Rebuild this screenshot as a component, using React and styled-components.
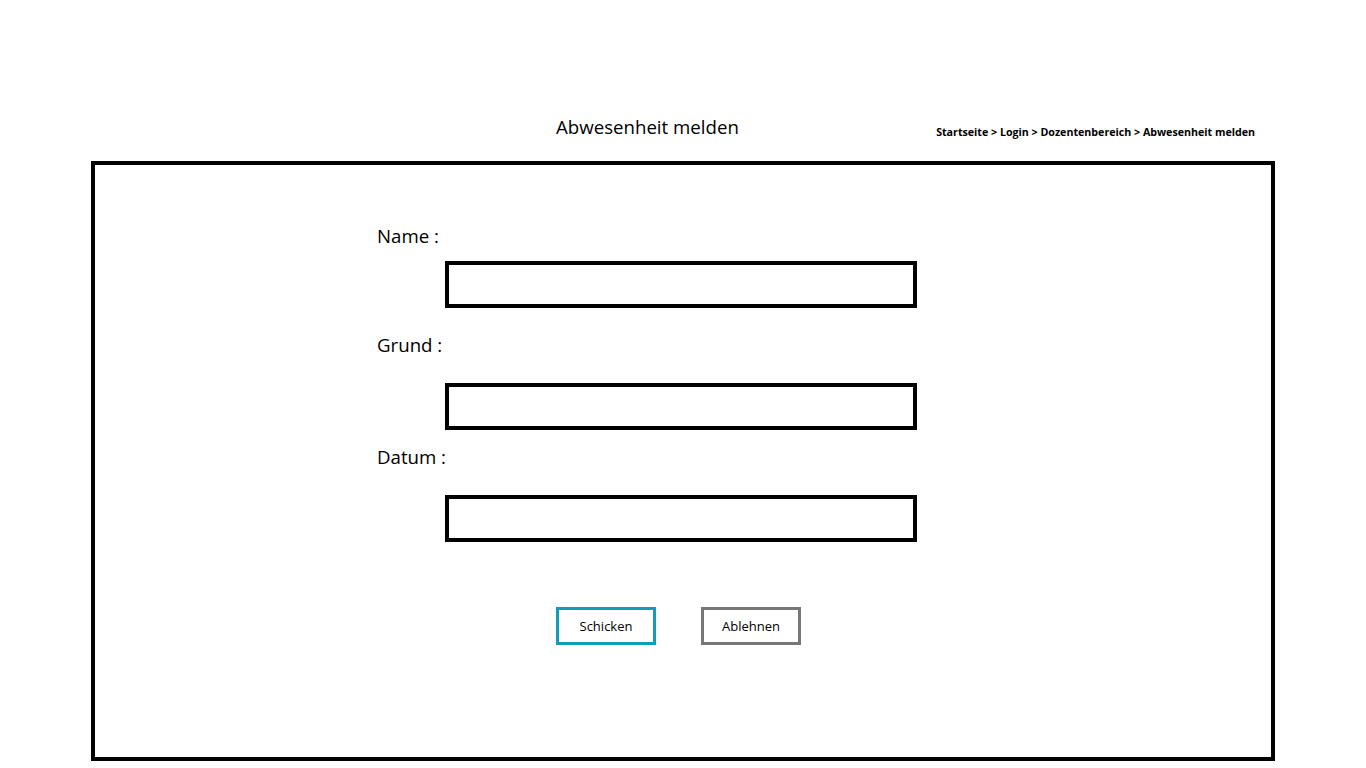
import React from "react";
import styled, { createGlobalStyle } from "styled-components";

const Global = createGlobalStyle`
  html, body { margin: 0; padding: 0; background: #fff; }
  body { font-family: "Open Sans", "Noto Sans", sans-serif; color: #000; }
  * { box-sizing: border-box; }
`;

const Page = styled.div`
  width: 1184px;
  margin-left: 91px;
  padding-top: 115px;
`;

const Header = styled.header`
  display: flex;
  align-items: flex-start;
  padding: 0 20px 0 465px;
  height: 46px;
`;

const Title = styled.h1`
  margin: 0;
  font-size: 18.67px;
  line-height: 24px;
  font-weight: 400;
`;

const Breadcrumb = styled.nav`
  margin: 10px 0 0 auto;
  font-size: 10.67px;
  font-weight: 700;
  line-height: 14px;
`;

const Panel = styled.main`
  height: 600px;
  border: 4px solid #000;
  padding: 59px 0 0 282px;
  display: flex;
  flex-direction: column;
  align-items: flex-start;
`;

const Label = styled.label`
  font-size: 18.67px;
  line-height: 24px;
  margin-top: ${(p) => p.$top || 0}px;
`;

const Field = styled.input`
  width: 472px;
  height: 47px;
  margin: ${(p) => p.$top}px 0 0 68px;
  border: 4px solid #000;
  background: #fff;
  outline: none;
  font: inherit;
`;

const Actions = styled.div`
  display: flex;
  gap: 45px;
  margin: 65px 0 0 179px;
`;

const Button = styled.button`
  width: 100px;
  height: 38px;
  border: 3px solid ${(p) => p.$color};
  background: #fff;
  font-family: "Open Sans", sans-serif;
  font-size: 13px;
  color: #000;
  padding: 0;
  cursor: pointer;
`;

export default function App() {
  return (
    <>
      <Global />
      <Page>
        <Header>
          <Title>Abwesenheit melden</Title>
          <Breadcrumb>Startseite &gt; Login &gt; Dozentenbereich &gt; Abwesenheit melden</Breadcrumb>
        </Header>
        <Panel>
          <Label>Name :</Label>
          <Field $top={13} />
          <Label $top={25}>Grund :</Label>
          <Field $top={26} />
          <Label $top={15}>Datum :</Label>
          <Field $top={26} />
          <Actions>
            <Button $color="#119db6">Schicken</Button>
            <Button $color="#777777">Ablehnen</Button>
          </Actions>
        </Panel>
      </Page>
    </>
  );
}
